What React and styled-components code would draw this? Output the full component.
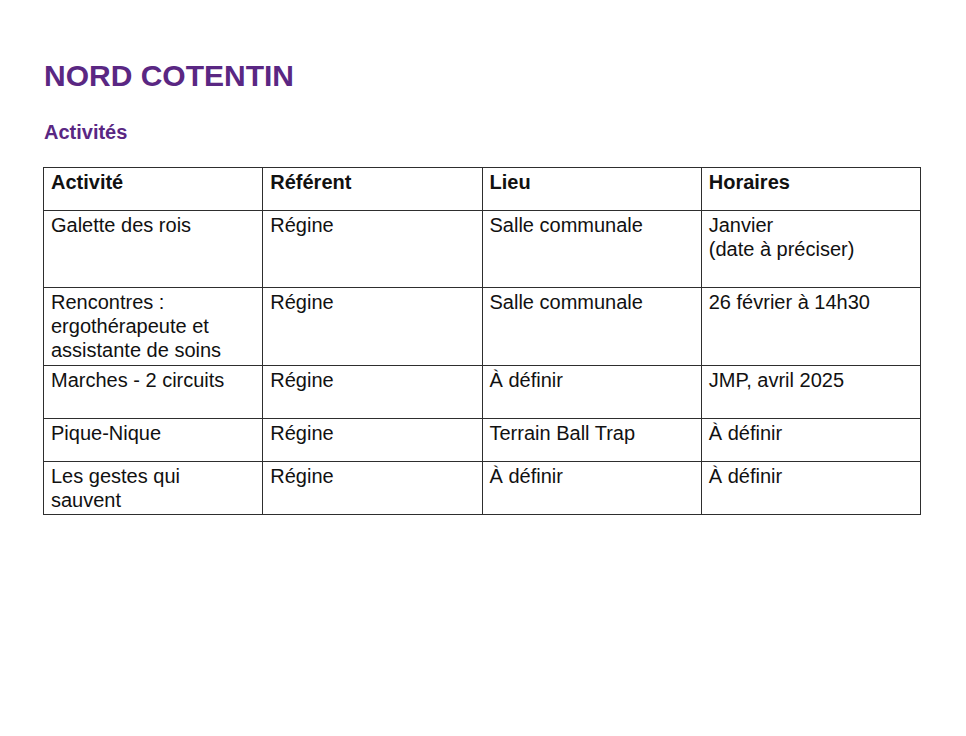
import React from "react";
import styled, { createGlobalStyle } from "styled-components";

const Global = createGlobalStyle`
  html, body { margin: 0; padding: 0; background: #fff; }
  body { font-family: "Liberation Sans", Arial, sans-serif; color: #111; }
`;

const Page = styled.div`
  padding: 59px 45px 0 43px;
`;

const Title = styled.h1`
  margin: 0 0 0 1px;
  font-size: 30px;
  line-height: 1.15;
  font-weight: 700;
  color: #5a2783;
`;

const Subtitle = styled.h2`
  margin: 27px 0 0 1px;
  font-size: 20px;
  line-height: 1.15;
  font-weight: 700;
  color: #5a2783;
`;

const Table = styled.table`
  margin-top: 23px;
  width: 878px;
  border-collapse: collapse;
  table-layout: fixed;
`;

const Row = styled.tr`
  height: ${(p) => p.$h}px;
`;

const Cell = styled.td`
  border: 1px solid #2e2e2e;
  vertical-align: top;
  padding: 2px 7px 0 7px;
  font-size: 20px;
  line-height: 24px;
  font-weight: ${(p) => (p.$head ? 700 : 400)};
  color: #111;
  width: 25%;
`;

const head = ["Activité", "Référent", "Lieu", "Horaires"];
const rows = [
  { h: 77, c: ["Galette des rois", "Régine", "Salle communale", ["Janvier", "(date à préciser)"]] },
  { h: 78, c: [["Rencontres :", "ergothérapeute et", "assistante de soins"], "Régine", "Salle communale", "26 février à 14h30"] },
  { h: 53, c: ["Marches - 2 circuits", "Régine", "À définir", "JMP, avril 2025"] },
  { h: 43, c: ["Pique-Nique", "Régine", "Terrain Ball Trap", "À définir"] },
  { h: 53, c: [["Les gestes qui", "sauvent"], "Régine", "À définir", "À définir"] },
];

const renderContent = (v) =>
  Array.isArray(v)
    ? v.map((l, i) => (
        <React.Fragment key={i}>
          {i > 0 && <br />}
          {l}
        </React.Fragment>
      ))
    : v;

export default function App() {
  return (
    <>
      <Global />
      <Page>
        <Title>NORD COTENTIN</Title>
        <Subtitle>Activités</Subtitle>
        <Table>
          <tbody>
            <Row $h={43}>
              {head.map((h) => (
                <Cell key={h} $head>
                  {h}
                </Cell>
              ))}
            </Row>
            {rows.map((r, i) => (
              <Row key={i} $h={r.h}>
                {r.c.map((c, j) => (
                  <Cell key={j}>{renderContent(c)}</Cell>
                ))}
              </Row>
            ))}
          </tbody>
        </Table>
      </Page>
    </>
  );
}
